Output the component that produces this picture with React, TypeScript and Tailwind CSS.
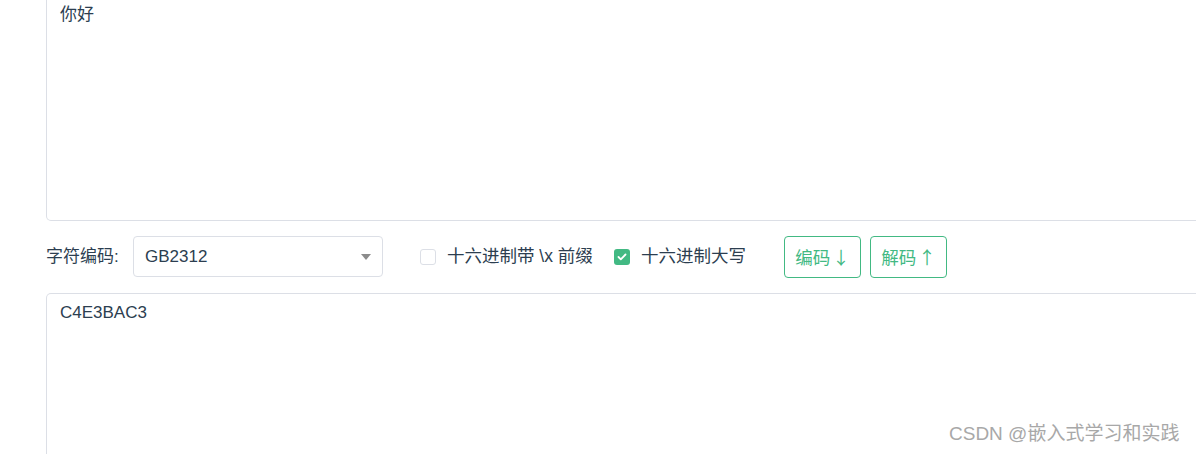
import React from "react";

export default function App() {
  const font = { fontFamily: '"Liberation Sans", "Noto Sans CJK SC", sans-serif' };
  return (
    <div className="relative w-[1196px] h-[454px] overflow-hidden bg-white text-[#2c3e50]" style={font}>
      <div className="pl-[46px] flex flex-col">
        <div className="w-[1200px] h-[221px] border-x border-b border-[#dcdfe6] rounded-bl-[5px] px-[13px] pt-[4px] text-[17px] leading-[22px]">
          你好
        </div>
        <div className="mt-[15px] flex items-start h-[42px] text-[17px]">
          <span className="w-[87px] h-[41px] flex items-center">字符编码:</span>
          <div className="w-[250px] h-[41px] border border-[#dcdfe6] rounded-[4px] flex items-center justify-between pl-[11px] pr-[11px]">
            <span>GB2312</span>
            <svg width="10" height="6" viewBox="0 0 10 6"><path d="M0 0h10L5 6z" fill="#8c8c8c" /></svg>
          </div>
          <div className="ml-[37px] h-[41px] flex items-center">
            <span className="w-[16px] h-[16px] border border-[#dcdfe6] rounded-[3px] bg-white" />
            <span className="ml-[11px] w-[167px] text-[17.5px]">十六进制带 \x 前缀</span>
          </div>
          <div className="h-[41px] flex items-center">
            <span className="w-[16px] h-[16px] rounded-[3px] bg-[#42b983] flex items-center justify-center">
              <svg width="10" height="8" viewBox="0 0 10 8"><path d="M1.5 4l2.3 2.3L8.5 1.5" stroke="white" strokeWidth="1.8" fill="none" strokeLinecap="round" strokeLinejoin="round" /></svg>
            </span>
            <span className="ml-[11px] w-[143px] text-[17.5px]">十六进制大写</span>
          </div>
          <button className="w-[77px] h-[42px] border border-[#42b983] rounded-[4px] text-[#42b983] text-[17.5px] flex items-center justify-center" style={{ fontFamily: '"Noto Sans CJK SC", sans-serif' }}>
            编码<span className="ml-[2px]">↓</span>
          </button>
          <button className="ml-[9px] w-[77px] h-[42px] border border-[#42b983] rounded-[4px] text-[#42b983] text-[17.5px] flex items-center justify-center" style={{ fontFamily: '"Noto Sans CJK SC", sans-serif' }}>
            解码<span className="ml-[2px]">↑</span>
          </button>
        </div>
        <div className="mt-[15px] w-[1200px] h-[200px] border-x border-t border-[#dcdfe6] rounded-tl-[5px] px-[13px] pt-[8px] text-[17px] leading-[22px]">
          C4E3BAC3
        </div>
      </div>
      <div className="absolute left-[949px] top-[423px] text-[19px] leading-[22px] text-[#a8a8a8] whitespace-nowrap" style={{ textShadow: "0 0 1px #fff" }}>
        CSDN @嵌入式学习和实践
      </div>
    </div>
  );
}
